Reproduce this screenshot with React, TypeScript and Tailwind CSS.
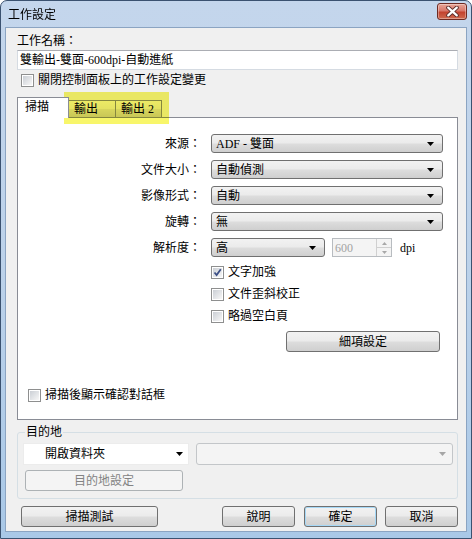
import React from "react";

const btnFace =
  "bg-[linear-gradient(#f2f2f2,#ebebeb_48%,#dddddd_52%,#cfcfcf)] border border-[#707070] rounded-[3px]";

function Arrow({ color = "#000" }: { color?: string }) {
  return (
    <svg width="7" height="4" viewBox="0 0 7 4" className="shrink-0">
      <polygon points="0,0 7,0 3.5,4" fill={color} />
    </svg>
  );
}

function Combo({ value, className = "" }: { value: string; className?: string }) {
  return (
    <div className={`h-[19px] flex items-center justify-between pl-[4px] pr-[8px] leading-[14px] ${btnFace} ${className}`}>
      <span>{value}</span>
      <Arrow />
    </div>
  );
}

function Check({ checked = false }: { checked?: boolean }) {
  return (
    <span className="relative w-[13px] h-[13px] shrink-0 border border-[#8e8f8f] bg-white p-px">
      <span className="block w-full h-full bg-linear-to-br from-[#cbcfd5] to-[#f7f7f7]" />
      {checked && (
        <svg width="11" height="11" viewBox="0 0 11 11" className="absolute left-0 top-0">
          <path d="M2.5 5.5 L4.6 8 L8.8 2.2" fill="none" stroke="#3c4f86" strokeWidth="1.8" />
        </svg>
      )}
    </span>
  );
}

function CheckRow({ label, checked, className = "" }: { label: string; checked?: boolean; className?: string }) {
  return (
    <div className={`flex items-center gap-[4px] leading-[14px] ${className}`}>
      <Check checked={checked} />
      <span>{label}</span>
    </div>
  );
}

function Button({ label, className = "", isDefault = false }: { label: string; className?: string; isDefault?: boolean }) {
  return (
    <div
      className={`h-[21px] flex items-center justify-center leading-[14px] ${btnFace} ${
        isDefault ? "border-[#3c7fb1] shadow-[inset_0_0_0_1px_#a6d8f6]" : ""
      } ${className}`}
    >
      {label}
    </div>
  );
}

export default function App() {
  return (
    <div className="w-[472px] h-[539px] text-[12px] text-black font-['Liberation_Serif','Noto_Sans_CJK_TC',serif]">
      <div className="relative flex flex-col w-full h-full rounded-t-[7px] border border-[#3b5270] bg-linear-to-b from-[#c4d6ec] via-[#bcd2ea] to-[#a9c8e7]">
        {/* title bar */}
        <div className="h-[26px] flex items-center pl-[7px] shrink-0">
          <span className="font-['Noto_Sans_CJK_TC',sans-serif] leading-[14px]">工作設定</span>
          <div className="ml-auto mr-[4px] mt-[-5px] w-[30px] h-[17px] rounded-[3px] border border-[#6e2a22] bg-[linear-gradient(#e8a597,#d8776a_45%,#c3432f_55%,#cf6a4f)] flex items-center justify-center shadow-[inset_0_0_0_1px_rgba(255,255,255,0.35)]">
            <svg width="13" height="11" viewBox="0 0 13 11">
              <path d="M2.2 1.6 L10.8 9.4 M10.8 1.6 L2.2 9.4" stroke="#5a2b28" strokeWidth="4" strokeLinecap="round" />
              <path d="M2.2 1.6 L10.8 9.4 M10.8 1.6 L2.2 9.4" stroke="#fff" strokeWidth="2.2" strokeLinecap="round" />
            </svg>
          </div>
        </div>

        {/* client area */}
        <div className="flex-1 mx-[4px] mb-[6px] border border-[#8ba4c2] bg-[#f0f0f0] pl-[11px] pr-[8px] pt-[6px] flex flex-col">
          <div className="h-[14px] leading-[14px]">工作名稱：</div>
          <div className="mt-[2px] h-[20px] flex items-center bg-white border border-[#d5dbe2] border-t-[#abadb3] pl-[2px] leading-[14px]">
            雙輸出-雙面-600dpi-自動進紙
          </div>
          <CheckRow label="關閉控制面板上的工作設定變更" className="mt-[3px] h-[14px] pl-[4px]" />

          {/* tabs */}
          <div className="relative mt-[10px] h-[20px] flex items-end">
            <div className="relative z-10 -mb-px w-[52px] h-[21px] border border-b-0 border-[#898c95] bg-white pl-[7px] pt-[2px] leading-[14px]">
              掃描
            </div>
            <div className="-ml-px w-[48px] h-[17px] border border-b-0 border-[#898c95] bg-[linear-gradient(#f3f3f3,#ebebeb_48%,#dddddd_52%,#cfcfcf)] pl-[5px] pt-[2px] leading-[13px]">
              輸出
            </div>
            <div className="-ml-px w-[47px] h-[17px] border border-b-0 border-[#898c95] bg-[linear-gradient(#f3f3f3,#ebebeb_48%,#dddddd_52%,#cfcfcf)] pl-[5px] pt-[2px] leading-[13px]">
              輸出 2
            </div>
          </div>
          <div className="h-[303px] border border-[#898c95] bg-white pt-[16px] flex flex-col">
            <div className="grid grid-cols-[183px_232px] gap-x-[10px] gap-y-[7px] items-center">
              <div className="text-right leading-[14px]">來源：</div>
              <Combo value="ADF - 雙面" />
              <div className="text-right leading-[14px]">文件大小：</div>
              <Combo value="自動偵測" />
              <div className="text-right leading-[14px]">影像形式：</div>
              <Combo value="自動" />
              <div className="text-right leading-[14px]">旋轉：</div>
              <Combo value="無" />
              <div className="text-right leading-[14px]">解析度：</div>
              <div className="flex items-center">
                <Combo value="高" className="w-[114px]" />
                <div className="ml-[7px] w-[60px] h-[19px] flex items-center border border-[#b8bcc0] bg-[#f4f4f4] pl-[2px] text-[#a3a3a3] leading-[14px]">
                  <span className="flex-1">600</span>
                  <div className="w-[15px] h-full flex flex-col border-l border-[#d0d0d0]">
                    <div className="flex-1 flex items-center justify-center border-b border-[#d0d0d0]">
                      <svg width="5" height="3" viewBox="0 0 5 3"><polygon points="0,3 5,3 2.5,0" fill="#a8a8a8" /></svg>
                    </div>
                    <div className="flex-1 flex items-center justify-center">
                      <svg width="5" height="3" viewBox="0 0 5 3"><polygon points="0,0 5,0 2.5,3" fill="#a8a8a8" /></svg>
                    </div>
                  </div>
                </div>
                <span className="ml-[8px] leading-[14px]">dpi</span>
              </div>
            </div>

            <div className="mt-[4px] ml-[193px] flex flex-col">
              <CheckRow label="文字加強" checked className="h-[22px]" />
              <CheckRow label="文件歪斜校正" className="h-[22px]" />
              <CheckRow label="略過空白頁" className="h-[22px]" />
            </div>
            <Button label="細項設定" className="mt-[4px] ml-[268px] w-[154px] h-[20px]" />
            <CheckRow label="掃描後顯示確認對話框" className="mt-[36px] ml-[10px] h-[14px]" />
          </div>

          {/* destination group */}
          <fieldset className="mt-[6px] border border-[#d5dfe5] rounded-[3px] pl-[5px] pr-[4px] pb-[7px]">
            <legend className="ml-[2px] px-px leading-[12px]">目的地</legend>
            <div className="mt-[5px] flex items-center gap-[7px]">
              <div className="w-[166px] h-[22px] flex items-center justify-between bg-white border border-[#ececec] pl-[21px] pr-[5px] leading-[14px]">
                <span>開啟資料夾</span>
                <Arrow />
              </div>
              <div className="flex-1 h-[22px] flex items-center justify-end rounded-[3px] border border-[#c3c6c9] bg-[#f4f4f4] pr-[6px]">
                <Arrow color="#a6a6a6" />
              </div>
            </div>
            <div className="mt-[5px] ml-[2px] w-[158px] h-[21px] flex items-center justify-center rounded-[3px] border border-[#adb2b5] bg-[#f4f4f4] text-[#838383] leading-[14px]">
              目的地設定
            </div>
          </fieldset>

          {/* bottom buttons */}
          <div className="mt-[7px] flex items-center">
            <Button label="掃描測試" className="ml-[4px] w-[137px]" />
            <Button label="說明" className="ml-auto w-[73px]" />
            <Button label="確定" isDefault className="ml-[9px] w-[73px]" />
            <Button label="取消" className="ml-[8px] w-[73px]" />
          </div>
        </div>

        {/* annotation highlight over tabs */}
        <div className="absolute left-[63px] top-[91px] w-[105px] h-[32px] bg-[#f8f66a] mix-blend-multiply" />
      </div>
    </div>
  );
}
